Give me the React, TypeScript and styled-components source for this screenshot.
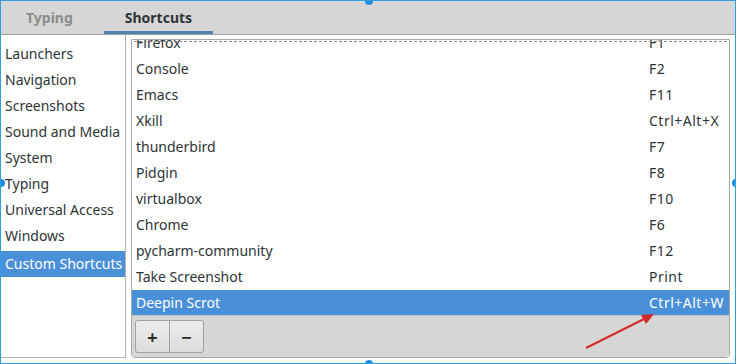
import React from 'react'
import styled, { createGlobalStyle } from 'styled-components'

const ROW_H = 26
const BLUE = '#4a90d9'
const TEXT = '#2e3436'

const categories = [
  'Launchers',
  'Navigation',
  'Screenshots',
  'Sound and Media',
  'System',
  'Typing',
  'Universal Access',
  'Windows',
]

const shortcuts: [string, string][] = [
  ['Firefox', 'F1'],
  ['Console', 'F2'],
  ['Emacs', 'F11'],
  ['Xkill', 'Ctrl+Alt+X'],
  ['thunderbird', 'F7'],
  ['Pidgin', 'F8'],
  ['virtualbox', 'F10'],
  ['Chrome', 'F6'],
  ['pycharm-community', 'F12'],
  ['Take Screenshot', 'Print'],
  ['Deepin Scrot', 'Ctrl+Alt+W'],
]

export default function App() {
  return (
    <>
      <GlobalStyle />
      <Frame>
        <Header>
          <Tab>Typing</Tab>
          <Tab $active>Shortcuts</Tab>
        </Header>
        <Body>
          <Sidebar>
            {categories.map((c) => (
              <SideItem key={c}>{c}</SideItem>
            ))}
            <SideItem $selected $gap>
              Custom Shortcuts
            </SideItem>
          </Sidebar>
          <Pane>
            <ListFrame>
              <Viewport>
                <Rows>
                  {shortcuts.map(([name, accel]) => (
                    <Row key={name} $selected={name === 'Deepin Scrot'}>
                      <span>{name}</span>
                      <Accel>{accel}</Accel>
                    </Row>
                  ))}
                </Rows>
                <FocusLine />
              </Viewport>
              <Toolbar>
                <ToolButton $first>+</ToolButton>
                <ToolButton>−</ToolButton>
              </Toolbar>
            </ListFrame>
          </Pane>
        </Body>
        <Handle style={{ left: 364, top: -4 }} />
        <Handle style={{ left: 364, top: 359 }} />
        <Handle style={{ left: -4, top: 178 }} />
        <Handle style={{ left: 731, top: 178 }} />
        <Arrow width='80' height='44' viewBox='0 0 80 44'>
          <line x1='2' y1='41' x2='62' y2='11' stroke='#d22a2a' strokeWidth='2' />
          <polygon points='70,7 57,8 62,17' fill='#d22a2a' />
        </Arrow>
      </Frame>
    </>
  )
}

const GlobalStyle = createGlobalStyle`
  html, body {
    margin: 0;
    padding: 0;
    background: #ffffff;
  }
  body {
    font-family: "Noto Sans", "Open Sans", sans-serif;
    font-size: 14px;
    color: ${TEXT};
  }
`

const Frame = styled.div`
  position: relative;
  width: 736px;
  height: 364px;
  box-sizing: border-box;
  border: 1px solid #2d9fe0;
  background: #ffffff;
  display: flex;
  flex-direction: column;
  overflow: hidden;
`

const Header = styled.div`
  display: flex;
  gap: 6px;
  height: 33px;
  flex-shrink: 0;
  background: #d6d6d6;
  border-bottom: 1px solid #9e9e9e;
`

const Tab = styled.div<{ $active?: boolean }>`
  display: flex;
  align-items: center;
  justify-content: center;
  padding: ${(p) => (p.$active ? '0 21px' : '0 25px')};
  font-size: 14px;
  font-weight: bold;
  color: ${(p) => (p.$active ? TEXT : '#8b8d8a')};
  box-shadow: ${(p) => (p.$active ? 'inset 0 -3px 0 #5482b0' : 'none')};
`

const Body = styled.div`
  display: flex;
  flex: 1;
  min-height: 0;
`

const Sidebar = styled.div`
  width: 125px;
  flex-shrink: 0;
  box-sizing: border-box;
  padding-top: 6px;
  margin-bottom: 5px;
  border-right: 1px solid #b4b4b4;
  border-bottom: 1px solid #b4b4b4;
`

const SideItem = styled.div<{ $selected?: boolean; $gap?: boolean }>`
  height: ${ROW_H}px;
  line-height: ${ROW_H}px;
  padding-left: 4px;
  white-space: nowrap;
  margin-top: ${(p) => (p.$gap ? '2px' : '0')};
  background: ${(p) => (p.$selected ? BLUE : 'transparent')};
  color: ${(p) => (p.$selected ? '#ffffff' : TEXT)};
`

const Pane = styled.div`
  flex: 1;
  padding: 4px 5px 5px 5px;
  display: flex;
`

const ListFrame = styled.div`
  flex: 1;
  display: flex;
  flex-direction: column;
  border: 1px solid #a8a8a8;
  border-radius: 0 0 4px 4px;
  overflow: hidden;
`

const Viewport = styled.div`
  position: relative;
  height: 276px;
  overflow: hidden;
  background: #ffffff;
`

const Rows = styled.div`
  margin-top: -10px;
`

const Row = styled.div<{ $selected?: boolean }>`
  display: grid;
  grid-template-columns: 513px 1fr;
  height: ${ROW_H}px;
  line-height: ${ROW_H}px;
  padding-left: 4px;
  white-space: nowrap;
  background: ${(p) => (p.$selected ? BLUE : 'transparent')};
  color: ${(p) => (p.$selected ? '#ffffff' : TEXT)};
`

const Accel = styled.span`
  letter-spacing: 0.5px;
`

const FocusLine = styled.div`
  position: absolute;
  left: 2px;
  right: 2px;
  top: 1px;
  border-top: 1px dashed #8a8a8a;
`

const Toolbar = styled.div`
  flex: 1;
  display: flex;
  align-items: flex-start;
  padding: 4px 3px;
  background: #d6d6d6;
  border-top: 1px solid #c4c4c4;
`

const ToolButton = styled.div<{ $first?: boolean }>`
  width: 33px;
  height: 31px;
  display: flex;
  align-items: center;
  justify-content: center;
  font-size: 18px;
  font-weight: bold;
  color: #2a2a2a;
  background: linear-gradient(#ececec, #dcdcdc);
  border: 1px solid #a2a2a2;
  border-radius: ${(p) => (p.$first ? '3px 0 0 3px' : '0 3px 3px 0')};
  margin-left: ${(p) => (p.$first ? '0' : '-1px')};
`

const Handle = styled.div`
  position: absolute;
  width: 8px;
  height: 8px;
  border-radius: 50%;
  background: #1e8fe0;
`

const Arrow = styled.svg`
  position: absolute;
  left: 583px;
  top: 306px;
`
